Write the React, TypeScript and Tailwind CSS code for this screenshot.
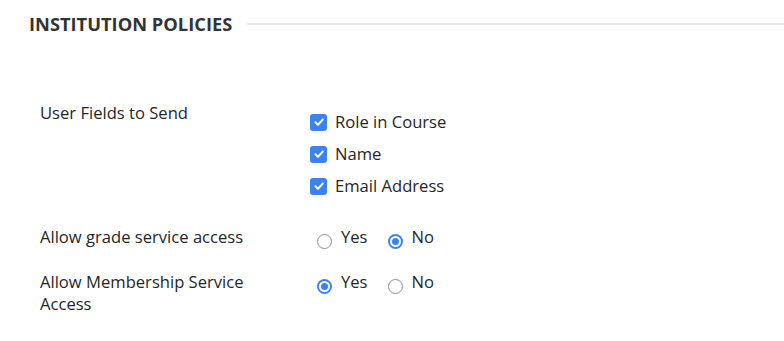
import React from 'react';

const Checkbox = ({ label }: { label: string }) => (
  <div className="flex h-[32px] items-center">
    <span className="-ml-[1px] flex h-[17px] w-[17px] items-center justify-center rounded-[3px] bg-[#3c82f6]">
      <svg width="12" height="12" viewBox="0 0 12 12" fill="none">
        <path d="M2.4 6.2L5 8.7L9.7 3.6" stroke="#fff" strokeWidth="2" strokeLinecap="round" strokeLinejoin="round" />
      </svg>
    </span>
    <span className="ml-[8px]">{label}</span>
  </div>
);

const Radio = ({ label, checked }: { label: string; checked?: boolean }) => (
  <div className="flex items-start">
    {checked ? (
      <span className="mt-[8px] flex h-[15px] w-[15px] items-center justify-center rounded-full bg-[#3c82f6]">
        <span className="flex h-[11px] w-[11px] items-center justify-center rounded-full bg-white">
          <span className="h-[7px] w-[7px] rounded-full bg-[#3c82f6]" />
        </span>
      </span>
    ) : (
      <span className="mt-[8px] h-[15px] w-[15px] rounded-full border-[1.5px] border-[#8f8f94] bg-white" />
    )}
    <span className="ml-[9px]">{label}</span>
  </div>
);

export default function App() {
  return (
    <div
      className="h-[341px] w-[784px] overflow-hidden bg-white text-[16.6px] leading-[22px] text-[#262626]"
      style={{ fontFamily: '"Open Sans", "Liberation Sans", sans-serif' }}
    >
      {/* Section header */}
      <div className="flex items-center pl-[29px] pt-[11px]">
        <h2 className="text-[18.3px] font-bold leading-[26px] text-[#333]">
          INSTITUTION POLICIES
        </h2>
        <div className="ml-[15px] h-[2px] flex-1 bg-[#e8e8e8]" />
      </div>

      <div className="mt-[65px] grid grid-cols-[271px_1fr] gap-y-[22px] px-[40px]">
        <div>User Fields to Send</div>
        <div className="pt-[4px]">
          <Checkbox label="Role in Course" />
          <Checkbox label="Name" />
          <Checkbox label="Email Address" />
        </div>

        <div className="pt-[2px]">Allow grade service access</div>
        <div className="flex gap-x-[20px] pl-[6px] pt-[2px]">
          <Radio label="Yes" />
          <Radio label="No" checked />
        </div>

        <div className="w-[240px]">Allow Membership Service Access</div>
        <div className="flex gap-x-[20px] pl-[6px]">
          <Radio label="Yes" checked />
          <Radio label="No" />
        </div>
      </div>
    </div>
  );
}
